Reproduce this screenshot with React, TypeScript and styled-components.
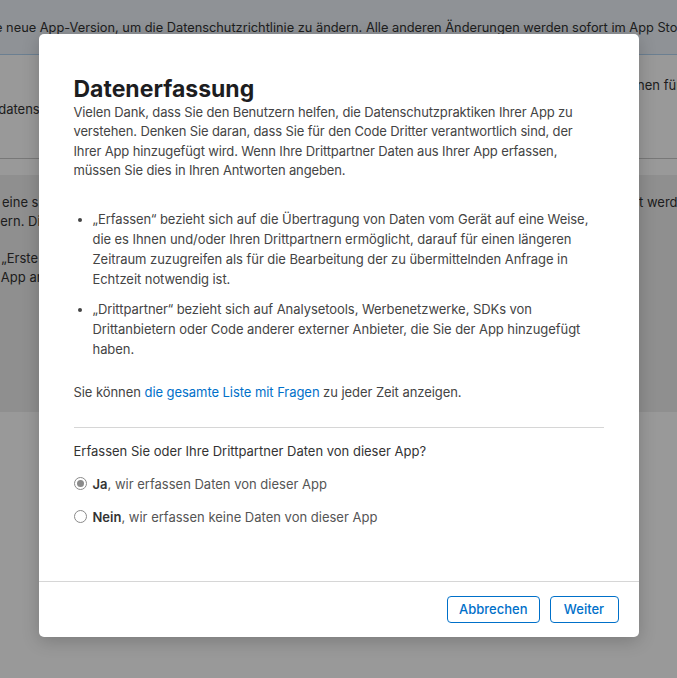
import styled, { createGlobalStyle } from "styled-components";

const GlobalStyle = createGlobalStyle`
  html, body {
    margin: 0;
    padding: 0;
    background: #fff;
    font-family: Inter, "Noto Sans", sans-serif;
    -webkit-font-smoothing: antialiased;
  }
`;

const App = () => {
  return (
    <Page>
      <GlobalStyle />
      <Banner>
        <BannerText>
          Erstellen Sie eine neue App-Version, um die Datenschutzrichtlinie zu
          ändern. Alle anderen Änderungen werden sofort im App Store angezeigt.
        </BannerText>
      </Banner>
      <Section>
        <Column>
          <HeadRow>
            <SectionTitle>App-Datenschutz</SectionTitle>
            <SideLink>Informationen für Apps</SideLink>
          </HeadRow>
          <SectionText>
            Ihr datenschutzrelevantes Profil wird auf der Produktseite
            angezeigt.
          </SectionText>
        </Column>
      </Section>
      <Gap />
      <GrayBlock>
        <Column>
          <BlockText>
            Für eine sichere Nutzung geben Sie an, welche Daten Sie und Ihre
            Partner erfassen und wofür diese genutzt werden können, einschließlich
            <br />
            Lesern. Diese Angaben erscheinen auf der Produktseite im App Store.
          </BlockText>
          <BlockText>
            Mit „Erste Schritte“ beantworten Sie alle Fragen zu den Praktiken Ihrer
            <br />
            die App an. Ihre Antworten können jederzeit aktualisiert werden.
          </BlockText>
        </Column>
      </GrayBlock>

      <Overlay>
        <Modal>
          <ModalBody>
            <Title>Datenerfassung</Title>
            <Intro>
              Vielen Dank, dass Sie den Benutzern helfen, die
              Datenschutzpraktiken Ihrer App zu verstehen. Denken Sie daran,
              dass Sie für den Code Dritter verantwortlich sind, der Ihrer App
              hinzugefügt wird. Wenn Ihre Drittpartner Daten aus Ihrer App
              erfassen, müssen Sie dies in Ihren Antworten angeben.
            </Intro>
            <List>
              <Item>
                „Erfassen“ bezieht sich auf die Übertragung von Daten vom Gerät
                auf eine Weise, die es Ihnen und/oder Ihren Drittpartnern
                ermöglicht, darauf für einen längeren Zeitraum zuzugreifen als
                für die Bearbeitung der zu übermittelnden Anfrage in Echtzeit
                notwendig ist.
              </Item>
              <Item>
                „Drittpartner“ bezieht sich auf Analysetools, Werbenetzwerke,
                SDKs von Drittanbietern oder Code anderer externer Anbieter, die
                Sie der App hinzugefügt haben.
              </Item>
            </List>
            <Note>
              Sie können <Link href="#">die gesamte Liste mit Fragen</Link> zu
              jeder Zeit anzeigen.
            </Note>
            <Divider />
            <Question>
              Erfassen Sie oder Ihre Drittpartner Daten von dieser App?
            </Question>
            <Options>
              <Option>
                <Radio $checked />
                <span>
                  <strong>Ja</strong>, wir erfassen Daten von dieser App
                </span>
              </Option>
              <Option>
                <Radio />
                <span>
                  <strong>Nein</strong>, wir erfassen keine Daten von dieser App
                </span>
              </Option>
            </Options>
          </ModalBody>
          <Footer>
            <Button>Abbrechen</Button>
            <Button $wide>Weiter</Button>
          </Footer>
        </Modal>
      </Overlay>
    </Page>
  );
};

const Page = styled.div`
  position: relative;
  height: 678px;
  overflow: hidden;
  color: #333;
  font-size: 13px;
`;

const Banner = styled.div`
  height: 54px;
  background: #eef3fa;
  border-bottom: 1px solid #b3d4f2;
  display: flex;
  align-items: center;
  justify-content: center;
  overflow: hidden;
`;

const BannerText = styled.div`
  flex: none;
  white-space: nowrap;
  font-size: 12.8px;
  margin-left: -22px;
`;

const Section = styled.div`
  height: 103px;
  border-bottom: 1px solid #c8c8c8;
  overflow: hidden;
`;

const Column = styled.div`
  width: 720px;
  margin-left: calc(50% - 360px);
`;

const HeadRow = styled.div`
  display: flex;
  justify-content: space-between;
  align-items: center;
  padding-top: 20px;
`;

const SectionTitle = styled.div`
  margin-left: 80px;
  font-size: 17px;
  font-weight: 600;
`;

const SideLink = styled.div`
  white-space: nowrap;
  margin-right: -18px;
`;

const SectionText = styled.div`
  margin-top: 4px;
  line-height: 20px;
  white-space: nowrap;
`;

const Gap = styled.div`
  height: 16px;
`;

const GrayBlock = styled.div`
  height: 237px;
  background: #eeeeee;
  padding-top: 18px;
  box-sizing: border-box;
  overflow: hidden;
`;

const BlockText = styled.p`
  margin: 0 0 18px;
  line-height: 19px;
  white-space: nowrap;
`;

const Overlay = styled.div`
  position: absolute;
  inset: 0;
  background: rgba(0, 0, 0, 0.4);
  display: flex;
  justify-content: center;
  align-items: flex-start;
  padding-top: 34px;
`;

const Modal = styled.div`
  width: 600px;
  background: #fff;
  border-radius: 5px;
  box-shadow: 0 4px 18px rgba(0, 0, 0, 0.2);
  overflow: hidden;
`;

const ModalBody = styled.div`
  padding: 44px 35px 54px;
`;

const Title = styled.h1`
  margin: 0;
  font-size: 23px;
  line-height: 23px;
  font-weight: 700;
  color: #1d1d1f;
`;

const Intro = styled.p`
  margin: 2px 0 0;
  max-width: 520px;
  line-height: 19.3px;
  letter-spacing: -0.14px;
  color: #444;
`;

const List = styled.ul`
  margin: 29px 0 0;
  padding-left: 19px;
  color: #444;
  letter-spacing: -0.06px;
`;

const Item = styled.li`
  line-height: 20px;
  & + & {
    margin-top: 10px;
  }
`;

const Note = styled.p`
  margin: 23px 0 0;
  line-height: 20px;
  letter-spacing: -0.06px;
  color: #444;
`;

const Link = styled.a`
  color: #0070c9;
  text-decoration: none;
`;

const Divider = styled.hr`
  margin: 25px 0 0;
  border: none;
  border-top: 1px solid #d6d6d6;
`;

const Question = styled.p`
  margin: 14px 0 0;
  line-height: 19.5px;
  color: #333;
`;

const Options = styled.div`
  margin-top: 12px;
  display: flex;
  flex-direction: column;
  gap: 13px;
`;

const Option = styled.label`
  display: flex;
  align-items: center;
  gap: 6px;
  height: 20px;
  color: #555;

  strong {
    font-weight: 600;
    color: #333;
  }
`;

const Radio = styled.span<{ $checked?: boolean }>`
  width: 13px;
  height: 13px;
  box-sizing: border-box;
  border-radius: 50%;
  border: 1px solid #8a8a8a;
  display: flex;
  align-items: center;
  justify-content: center;

  &::after {
    content: "";
    display: ${(p) => (p.$checked ? "block" : "none")};
    width: 7px;
    height: 7px;
    border-radius: 50%;
    background: #8a8a8a;
  }
`;

const Footer = styled.div`
  border-top: 1px solid #d6d6d6;
  padding: 14px 20px;
  display: flex;
  justify-content: flex-end;
  gap: 10px;
`;

const Button = styled.button<{ $wide?: boolean }>`
  height: 27px;
  padding: 0 11px;
  min-width: ${(p) => (p.$wide ? "69px" : "0")};
  background: #fff;
  border: 1px solid #0070c9;
  border-radius: 4px;
  color: #0070c9;
  font-family: Inter, "Noto Sans", sans-serif;
  font-size: 13px;
  font-weight: 500;
  cursor: pointer;
`;

export default App;
